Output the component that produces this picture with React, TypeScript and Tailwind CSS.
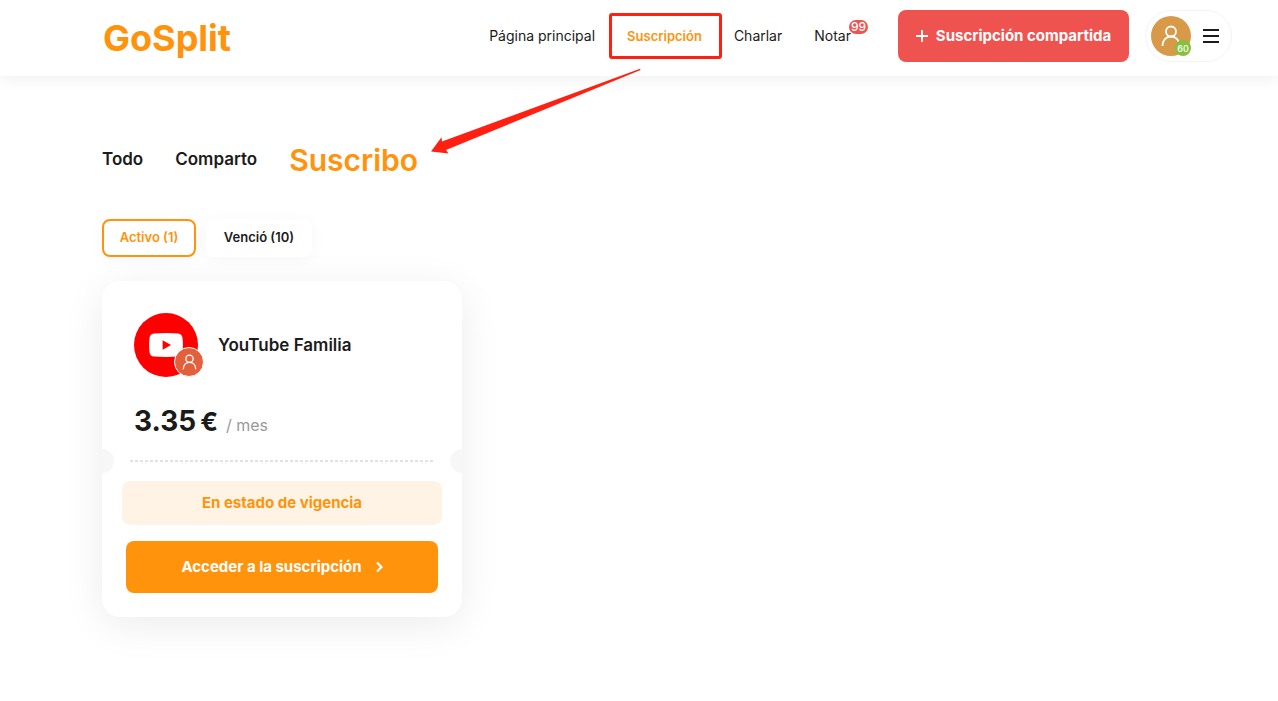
import React from "react";

function PersonIcon({ className }: { className?: string }) {
  return (
    <svg viewBox="0 0 20 22" fill="none" stroke="currentColor" strokeWidth="1.8" className={className} aria-hidden="true">
      <circle cx="10" cy="6.5" r="5" />
      <path d="M1.500 21c0-5.600 3.500-9.500 8.500-9.500s8.500 3.900 8.500 9.500" />
    </svg>
  );
}

function Header() {
  return (
    <header className="flex h-19 items-center justify-between bg-white pr-[46px] pl-[103px] shadow-[0_4px_16px_rgba(0,0,0,0.06)]">
      <a href="#inicio" className="text-4xl leading-10 font-bold text-[#ff930b]">
        GoSplit
      </a>
      <div className="-mt-1 flex items-center">
        <nav className="mr-[47px] flex items-center gap-8 text-sm text-[#1b1b1b]">
          <a href="#principal">Página principal</a>
          <a href="#suscripcion" className="relative text-[13px] font-semibold text-[#ff930b]">
            Suscripción
            <span className="pointer-events-none absolute -top-3.5 -right-5 -bottom-3.5 -left-[18px] rounded-[3px] border-3 border-[#ff2012]" />
          </a>
          <a href="#charlar">Charlar</a>
          <a href="#notar" className="relative">
            Notar
            <span className="absolute -top-1.5 left-full -ml-0.5 flex h-3.5 w-[19px] items-center justify-center rounded-full bg-[#ef5350] text-xs leading-none font-medium text-white">
              99
            </span>
          </a>
        </nav>
        <button
          type="button"
          className="mr-4 flex h-13 w-[231px] items-center justify-center gap-2 rounded-lg bg-[#ef5350] text-[15px] font-bold whitespace-nowrap text-white"
        >
          <svg viewBox="0 0 12 12" className="size-3" stroke="currentColor" strokeWidth="1.8" aria-hidden="true">
            <path d="M6 0v12M0 6h12" />
          </svg>
          Suscripción compartida
        </button>
        <button
          type="button"
          aria-label="Menú de usuario"
          className="flex h-13 w-[87px] items-center gap-3 rounded-full border border-[#f4f4f4] bg-white pl-[5px]"
        >
          <span className="relative flex size-10 items-center justify-center rounded-full bg-[#d89a48] text-white">
            <PersonIcon className="h-[22px] w-5" />
            <span className="absolute right-0 bottom-0 flex size-4 items-center justify-center rounded-full bg-[#85c13d] text-[9px] leading-none font-medium">
              60
            </span>
          </span>
          <svg viewBox="0 0 16 14" className="h-3.5 w-4 text-[#1b1b1b]" stroke="currentColor" strokeWidth="2" aria-hidden="true">
            <path d="M0 1h16M0 7h16M0 13h16" />
          </svg>
        </button>
      </div>
    </header>
  );
}

function SubscriptionCard() {
  return (
    <article className="mt-6 w-90 max-w-full rounded-[18px] bg-white pt-8 pb-6 shadow-[0_8px_40px_rgba(0,0,0,0.08)]">
      <div className="flex items-center gap-5 px-8">
        <div className="relative flex size-16 items-center justify-center rounded-full bg-[#ff0000]">
          <svg viewBox="0 0 34 24" className="h-6 w-[34px]" aria-hidden="true">
            <path d="M5 .4Q17-.4 29 .4Q33 .7 33.500 5Q34.300 12 33.500 19Q33 23.300 29 23.600Q17 24.400 5 23.600Q1 23.300.5 19Q-.3 12 .5 5Q1 .7 5 .4Z" fill="#fff" />
            <path d="M13.600 7.200v9.600l8.400-4.800z" fill="#f00" />
          </svg>
          <span className="absolute -right-1.5 bottom-0 flex size-[30px] items-center justify-center rounded-full border border-white bg-[#e2603b] text-white">
            <PersonIcon className="h-4 w-[15px]" />
          </span>
        </div>
        <h2 className="text-[17px] leading-6 font-semibold text-[#1b1b1b]">YouTube Familia</h2>
      </div>
      <p className="mt-6 flex h-10 items-baseline px-8 leading-10 text-[#1b1b1b]">
        <span className="text-[28px] font-bold">3.35</span>
        <span className="ml-1 text-[26px] font-bold">€</span>
        <span className="ml-2 text-base text-[#999]">/ mes</span>
      </p>
      <div className="mt-2 flex h-6 items-center justify-between">
        <span className="h-6 w-3 rounded-r-full bg-[#f7f7f7]" />
        <span className="mx-4 h-0.5 flex-1 bg-[repeating-linear-gradient(to_right,#e3e3e3_0,#e3e3e3_3px,transparent_3px,transparent_5px)]" />
        <span className="h-6 w-3 rounded-l-full bg-[#f7f7f7]" />
      </div>
      <p className="mx-5 mt-2 flex h-11 items-center justify-center rounded-lg bg-[#fff3e6] text-[15px] font-bold text-[#ff930b]">
        En estado de vigencia
      </p>
      <div className="mt-4 px-6">
        <button
          type="button"
          className="flex h-13 w-full items-center justify-center gap-3.5 rounded-lg bg-[#ff930b] text-[15px] font-bold text-white"
        >
          Acceder a la suscripción
          <svg viewBox="0 0 7 12" className="h-3 w-[7px]" fill="none" stroke="currentColor" strokeWidth="2.2" aria-hidden="true">
            <path d="M1 1.500L5.500 6L1 10.500" />
          </svg>
        </button>
      </div>
    </article>
  );
}

export default function App() {
  return (
    <div className="relative min-h-screen bg-white font-['Inter','Liberation_Sans',sans-serif]">
      <Header />
      <main className="px-[102px] pt-16 pb-20">
        <div className="flex h-10 items-center gap-8 text-[17px] font-semibold text-[#1b1b1b]">
          <button type="button">Todo</button>
          <button type="button">Comparto</button>
          <button type="button" className="text-[30px] text-[#ff930b]">
            Suscribo
          </button>
        </div>
        <div className="mt-[39px] flex gap-2.5 text-[13px] font-semibold">
          <button type="button" className="h-[38px] w-[94px] rounded-lg border-2 border-[#ff930b] bg-white text-[#ff930b] shadow-[0_2px_16px_rgba(0,0,0,0.04)]">
            Activo (1)
          </button>
          <button type="button" className="h-[38px] w-[106px] rounded-lg bg-white text-[#1b1b1b] shadow-[0_2px_16px_rgba(0,0,0,0.04)]">
            Venció (10)
          </button>
        </div>
        <SubscriptionCard />
      </main>
      <svg
        viewBox="0 0 210 86"
        className="pointer-events-none absolute top-[68px] left-[431px] h-[86px] w-[210px]"
        fill="#ff2012"
        aria-hidden="true"
      >
        <path d="M0 83.500L10.500 69.300L11 73.500L209 .8L209.500 2L15 82L17.500 85.500Z" />
      </svg>
    </div>
  );
}
